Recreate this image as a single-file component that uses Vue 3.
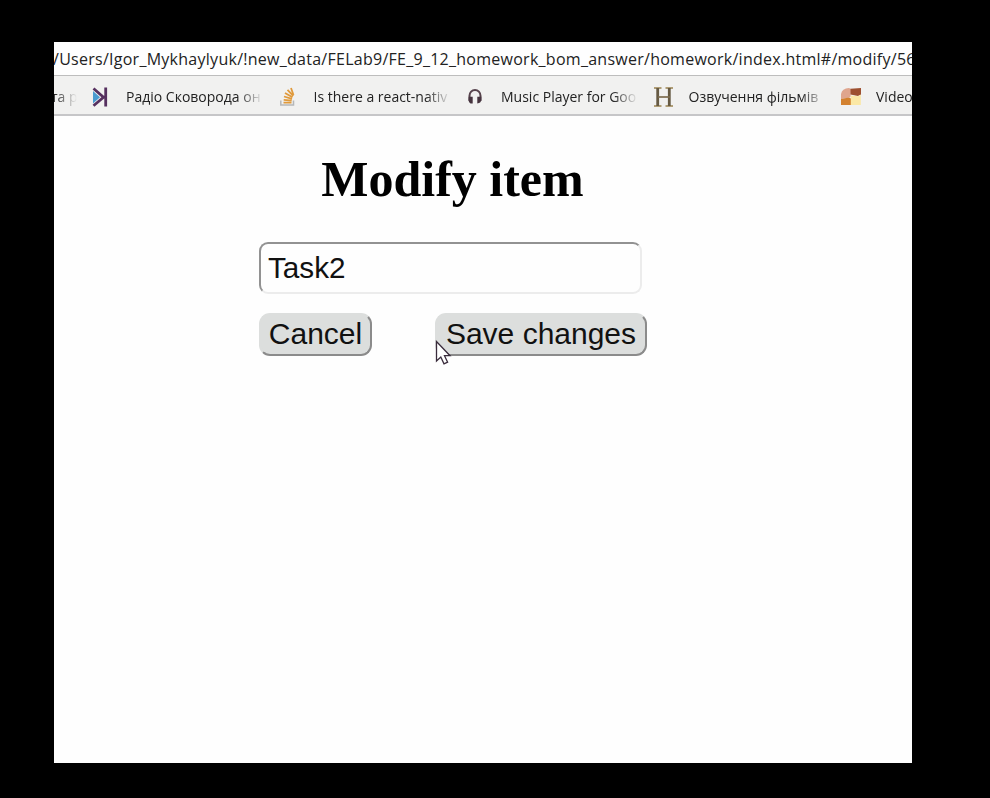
<script setup>
import { ref } from 'vue'

const task = ref('Task2')
const url = '/Users/Igor_Mykhaylyuk/!new_data/FELab9/FE_9_12_homework_bom_answer/homework/index.html#/modify/56'
const bookmarks = [
  { id: 'radio', label: 'Радіо Сковорода он' },
  { id: 'stack', label: 'Is there a react-nativ' },
  { id: 'music', label: 'Music Player for Goo' },
  { id: 'h', label: 'Озвучення фільмів' },
  { id: 'video', label: 'Video' }
]
</script>

<template>
  <div class="screen">
    <div class="window">
      <div class="address"><span class="url">{{ url }}</span></div>
      <nav class="bookmarks">
        <span class="label first">та р</span>
        <div v-for="b in bookmarks" :key="b.id" class="bookmark">
          <svg v-if="b.id === 'radio'" class="icon" viewBox="0 0 20 22">
            <path d="M2 5v12.500l7-6.300z" fill="#4a9bd0" />
            <path d="M2.500 2.500l10 8.700-10 8.500M10.500 11.200h4M14.700 1.500v19" fill="none" stroke="#56305f" stroke-width="2.800" />
          </svg>
          <svg v-else-if="b.id === 'stack'" class="icon" viewBox="0 0 20 22">
            <path d="M1.800 14.500v4.500h12.700v-4.500" fill="none" stroke="#b5b7b8" stroke-width="1.500" />
            <path d="M4.500 16.700h8M4.700 13.800l8 .800M5 10.500l8 2.400M6 7l7.500 4.300M8.500 3.800l5.800 6M12 2l2.500 7" fill="none" stroke="#e09a3c" stroke-width="1.800" />
          </svg>
          <svg v-else-if="b.id === 'music'" class="icon" viewBox="0 0 20 22">
            <path d="M3.500 15v-5.200a5.500 5.900 0 0 1 11 0V15" fill="none" stroke="#57434d" stroke-width="2" />
            <path d="M2.700 10.800H6.700V17.500H4.500Q2.500 16.500 2.500 13.500zM11.300 10.800h4V14Q15 17 11.300 17.500z" fill="#46343f" />
          </svg>
          <svg v-else-if="b.id === 'h'" class="icon" viewBox="0 0 20 22">
            <path d="M0 2h7.500M11.500 2H19M0 20h7.500M11.500 20H19" stroke="#9b824f" stroke-width="1.500" />
            <path d="M3.700 2v18M15.300 2v18" stroke="#665a43" stroke-width="2.800" />
            <path d="M4 11h12" stroke="#7c6c4e" stroke-width="1.700" />
          </svg>
          <svg v-else class="icon" viewBox="0 0 20 22">
            <path d="M0 13V8q1-5.500 8-6l2 1-.500 8-3 1z" fill="#dfa58d" />
            <path d="M9.500 2.700l10.500-.700v6.500l-3 1.500-7.500-1.500z" fill="#9d5030" />
            <path d="M0 13l8-1.500 2 1v6.500H0z" fill="#d3812f" />
            <path d="M9.800 9.500l7 .700 3-1.500v10.300H9.800z" fill="#fbe8a5" />
          </svg>
          <span class="label" :class="b.id">{{ b.label }}</span>
        </div>
      </nav>
      <main class="page">
        <h1>Modify item</h1>
        <input v-model="task" class="field" type="text" />
        <div class="actions">
          <button type="button">Cancel</button>
          <button type="button" class="save">
            Save changes
            <svg class="cursor" viewBox="0 0 18 26">
              <path d="M1.500 1.500v19.500l4.300-4 3.200 6.800 3.600-1.600-3.100-6.500h5.500z" fill="#fff" stroke="#3a2c3c" stroke-width="1.300" />
            </svg>
          </button>
        </div>
      </main>
    </div>
  </div>
</template>

<style>
body { margin: 0; background: #000; }
</style>

<style scoped>
.screen {
  box-sizing: border-box;
  height: 798px;
  padding: 42px 78px 35px 54px;
  background: #000;
  overflow: hidden;
}
.window {
  height: 721px;
  background: #fefefe;
  overflow: hidden;
}
.address {
  box-sizing: border-box;
  height: 34px;
  border-bottom: 1px solid #bdbdbd;
  font: 16px/34px "Open Sans", "Noto Sans", sans-serif;
  letter-spacing: 0.265px;
  color: #222;
  white-space: nowrap;
  overflow: hidden;
}
.url {
  margin-left: -1px;
}
.bookmarks {
  box-sizing: border-box;
  display: flex;
  align-items: center;
  height: 40px;
  padding-top: 4px;
  background: #f1f1f0;
  border-bottom: 2px solid #c6c6c8;
  overflow: hidden;
  font: 14px/20px "Open Sans", "Noto Sans", sans-serif;
  color: #222;
}
.bookmark {
  display: flex;
  align-items: center;
  flex: 0 0 187.500px;
}
.icon {
  flex: none;
  width: 20px;
  height: 22px;
  margin-right: 15px;
}
.label {
  width: 137px;
  white-space: nowrap;
  overflow: hidden;
  mask-image: linear-gradient(to right, #000 112px, transparent 137px);
}
.label.first {
  flex: none;
  width: 23px;
  margin: 0 14px 0 0;
  text-indent: -3px;
  mask-image: linear-gradient(to right, #000, transparent);
}
.page {
  padding: 35px 0 0 205px;
}
h1 {
  margin: 0;
  width: 387px;
  font: bold 50px/57px "Liberation Serif", serif;
  text-align: center;
  color: #000;
}
.field {
  box-sizing: border-box;
  display: block;
  width: 383px;
  height: 52px;
  margin: 34px 0 19px;
  padding: 0 7px;
  border: 2px solid;
  border-color: #929292 #ececec #ececec #929292;
  border-radius: 9px;
  background: #fefefe;
  font: 29.700px "Liberation Sans", sans-serif;
  color: #111;
  outline: none;
}
.actions {
  display: flex;
  justify-content: space-between;
  width: 388px;
}
button {
  position: relative;
  box-sizing: border-box;
  width: 113px;
  height: 43px;
  padding: 0 0 2px;
  border: 2px solid;
  border-color: #dcdedd #8b8b8b #8b8b8b #dcdedd;
  border-radius: 11px;
  background: #dcdedd;
  font: 30px/37px "Liberation Sans", sans-serif;
  color: #111;
  white-space: nowrap;
}
.save {
  width: 212px;
}
.cursor {
  position: absolute;
  left: -2px;
  top: 25px;
  width: 18px;
  height: 26px;
}
</style>
